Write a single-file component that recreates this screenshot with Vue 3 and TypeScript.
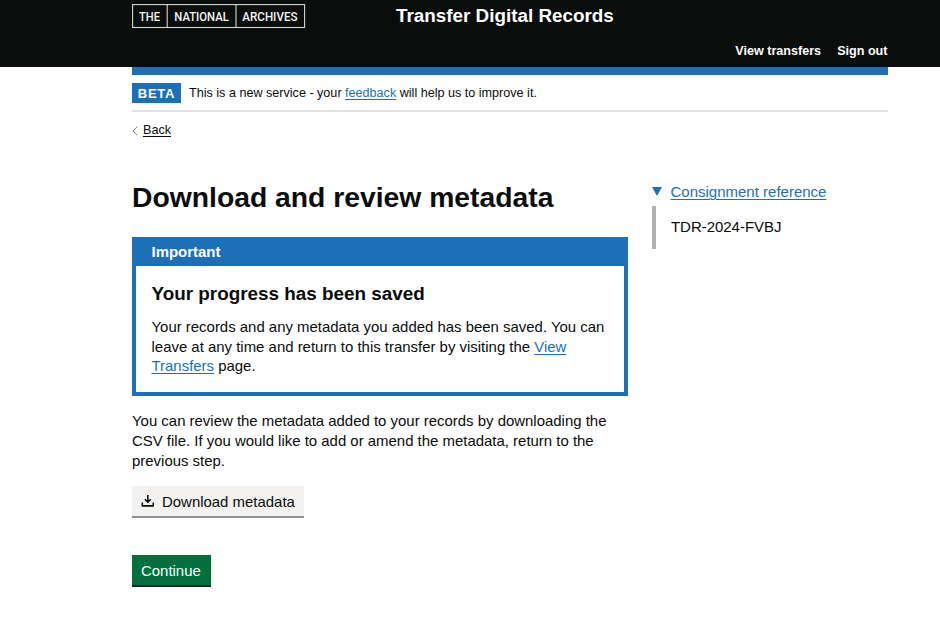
<script setup lang="ts">
import { ref } from 'vue'

interface NavLink {
  label: string
  href: string
}

const navigation: NavLink[] = [
  { label: 'View transfers', href: '#transfers' },
  { label: 'Sign out', href: '#sign-out' },
]

const consignmentReference = 'TDR-2024-FVBJ'
const referenceOpen = ref(true)
</script>

<template>
  <div class="page">
    <header class="header">
      <div class="container header-inner">
        <svg class="logo" width="174" height="25" viewBox="0 0 174 25" role="img" aria-label="The National Archives">
          <g fill="none" stroke="#d4d5d5" stroke-width="1.1">
            <rect x="0.6" y="0.6" width="172" height="22.9" />
            <path d="M35.2 0.6V23.5M104 0.6V23.5" />
          </g>
          <g class="logo-text">
            <text x="7" y="17" textLength="21" lengthAdjust="spacingAndGlyphs">THE</text>
            <text x="42.3" y="17" textLength="54.5" lengthAdjust="spacingAndGlyphs">NATIONAL</text>
            <text x="110.3" y="17" textLength="55.2" lengthAdjust="spacingAndGlyphs">ARCHIVES</text>
          </g>
        </svg>
        <div class="service-name">Transfer Digital Records</div>
        <nav class="nav">
          <a v-for="item in navigation" :key="item.label" :href="item.href">{{ item.label }}</a>
        </nav>
      </div>
    </header>

    <div class="container">
      <div class="accent"></div>
      <div class="phase">
        <strong class="tag">BETA</strong>
        <span class="phase-text">This is a new service - your <a class="link" href="#feedback">feedback</a> will help us to improve it.</span>
      </div>
      <div class="back">
        <svg width="6" height="10" viewBox="0 0 6 10"><path d="M5.4 0.6L1 5L5.4 9.4" fill="none" stroke="#85898b" stroke-width="1" /></svg>
        <a href="#back">Back</a>
      </div>

      <div class="columns">
        <main class="main">
          <h1>Download and review metadata</h1>
          <section class="notice">
            <h2>Important</h2>
            <div class="notice-body">
              <h3>Your progress has been saved</h3>
              <p>Your records and any metadata you added has been saved. You can<br />leave at any time and return to this transfer by visiting the <a class="link" href="#transfers">View<br />Transfers</a> page.</p>
            </div>
          </section>
          <p class="intro">You can review the metadata added to your records by downloading the<br />CSV file. If you would like to add or amend the metadata, return to the<br />previous step.</p>
          <button class="button secondary" type="button">
            <svg width="13" height="13" viewBox="0 0 13 13" fill="none" stroke="#0b0c0c" stroke-width="1.6">
              <path d="M6.8 0V7M3.9 4.3L6.8 7.2L9.7 4.3M1.3 7.5V10.9H12.3V7.5" />
            </svg>
            <span>Download metadata</span>
          </button>
          <button class="button primary" type="button"><span>Continue</span></button>
        </main>

        <aside class="aside">
          <button class="summary" type="button" :aria-expanded="referenceOpen" @click="referenceOpen = !referenceOpen">
            <svg width="10" height="9" viewBox="0 0 10 9"><path d="M0 0H10L5 9Z" fill="#1d70b8" /></svg>
            <span>Consignment reference</span>
          </button>
          <div v-if="referenceOpen" class="details">{{ consignmentReference }}</div>
        </aside>
      </div>
    </div>
  </div>
</template>

<style>
body {
  margin: 0;
  background: #fff;
}
</style>

<style scoped>
.page {
  min-height: 641px;
  color: #0b0c0c;
  font-family: "Liberation Sans", Arial, sans-serif;
  font-size: 14.95px;
  line-height: 19.6px;
}
.container {
  width: 755.5px;
  margin-left: 132px;
}
h1, h2, h3, p {
  margin: 0;
}
.header {
  height: 67px;
  background: #0b0c0c;
  color: #fff;
}
.header-inner {
  display: grid;
  grid-template-columns: 264px 1fr;
  grid-template-rows: 40px 27px;
}
.logo {
  margin-top: 4px;
  overflow: visible;
}
.logo-text {
  fill: #f4f4f4;
  font-family: Roboto, sans-serif;
  font-size: 13.3px;
  font-weight: 500;
}
.service-name {
  padding-top: 4px;
  font-size: 18.85px;
  font-weight: bold;
  line-height: 24px;
}
.nav {
  grid-column: 1 / -1;
  display: flex;
  justify-content: flex-end;
  gap: 16px;
  font-size: 12.6px;
  font-weight: bold;
  line-height: 23px;
}
.nav a {
  color: #fff;
  text-decoration: none;
}
.accent {
  height: 8px;
  background: #1d70b8;
}
.phase {
  display: flex;
  align-items: center;
  box-sizing: border-box;
  height: 37px;
  border-bottom: 2px solid #e0e1e2;
  font-size: 12.6px;
}
.phase-text {
  padding-top: 2px;
}
.tag {
  width: 49px;
  height: 20px;
  margin-right: 8px;
  background: #1d70b8;
  color: #fff;
  font-size: 13px;
  line-height: 21px;
  letter-spacing: 0.8px;
  text-align: center;
}
.link {
  color: #1d70b8;
  text-decoration: underline;
  text-decoration-thickness: 1px;
  text-underline-offset: 1.5px;
}
.back {
  display: flex;
  align-items: center;
  gap: 5px;
  height: 38px;
  font-size: 12.6px;
}
.back a {
  color: #0b0c0c;
  text-underline-offset: 1.5px;
}
.columns {
  display: flex;
  align-items: flex-start;
  gap: 23.5px;
  padding-top: 28px;
}
.main {
  width: 496px;
}
h1 {
  height: 59px;
  font-size: 28.3px;
  line-height: 38px;
}
.notice {
  box-sizing: border-box;
  height: 159px;
  border: 4px solid #1d70b8;
  border-top: 0;
}
.notice h2 {
  height: 29px;
  padding-left: 15.5px;
  background: #1d70b8;
  color: #fff;
  font-size: 14.95px;
  line-height: 29px;
}
.notice-body {
  padding: 16px 0 0 15.5px;
  white-space: nowrap;
}
.notice h3 {
  margin-bottom: 11px;
  font-size: 18.87px;
  line-height: 24px;
}
.intro {
  margin-top: 15.4px;
  white-space: nowrap;
}
.button {
  display: flex;
  align-items: center;
  box-sizing: border-box;
  border: 0;
  height: 32px;
  padding: 2px 9px 0;
  font: inherit;
  white-space: nowrap;
}
.secondary {
  width: 172px;
  margin-top: 15.6px;
  gap: 8px;
  background: #f3f2f1;
  color: #0b0c0c;
  border-bottom: 2px solid #929191;
}
.primary {
  width: 79px;
  margin-top: 37px;
  background: #00703c;
  color: #fff;
  border-bottom: 2px solid #002d18;
}
.aside {
  padding-top: 4px;
}
.summary {
  display: flex;
  align-items: center;
  gap: 9px;
  padding: 0;
  border: 0;
  background: none;
  color: #1d70b8;
  font: inherit;
  font-size: 15px;
  text-decoration: underline;
  text-decoration-thickness: 1px;
  text-underline-offset: 1.5px;
}
.details {
  box-sizing: border-box;
  height: 43px;
  margin-top: 4px;
  padding: 11px 0 0 15.5px;
  border-left: 4px solid #b1b4b6;
}
</style>
